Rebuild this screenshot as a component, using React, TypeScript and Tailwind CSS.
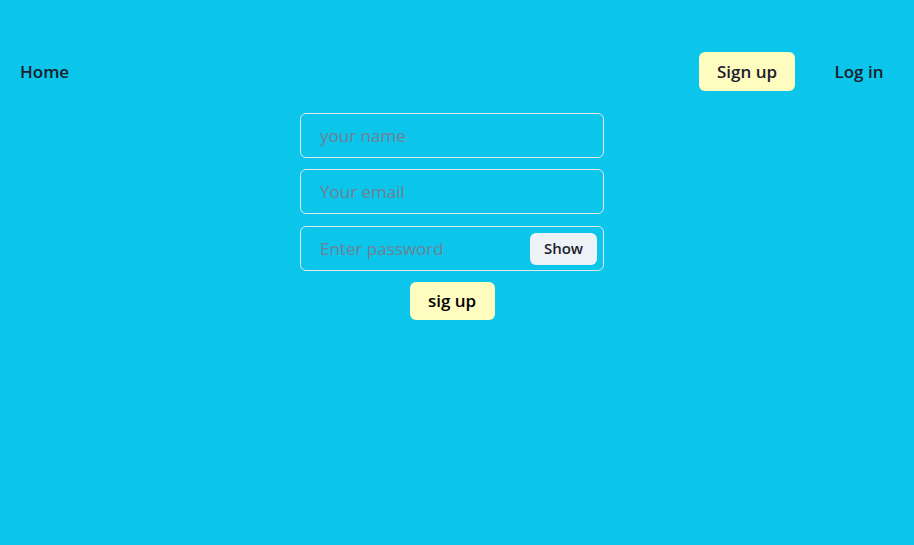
import { useState } from 'react';

export default function App() {
  const [show, setShow] = useState(false);

  return (
    <div className="min-h-[545px] w-full bg-[#0BC5EA] text-[#1A202C] font-['Open_Sans',sans-serif]">
      {/* top nav */}
      <nav className="flex items-center justify-between pt-[52px] pl-5 pr-[14px]">
        <a className="text-[17px] font-semibold leading-none">Home</a>
        <div className="flex items-center gap-[23px]">
          <button className="h-[39px] w-[96px] rounded-md bg-[#FEFCBF] text-[17px] font-semibold">
            Sign up
          </button>
          <button className="h-[39px] w-[82px] rounded-md text-[17px] font-semibold">
            Log in
          </button>
        </div>
      </nav>

      {/* sign up form */}
      <div className="mt-[22px] flex justify-center pr-[10px]">
        <form className="flex w-[304px] flex-col items-center">
          <input
            placeholder="your name"
            className="h-[45px] w-full rounded-md border border-[#E2E8F0] bg-transparent pl-[19px] text-[17px] outline-none placeholder:text-[#718096]"
          />
          <input
            placeholder="Your email"
            className="mt-[11px] h-[45px] w-full rounded-md border border-[#E2E8F0] bg-transparent pl-[19px] text-[17px] outline-none placeholder:text-[#718096]"
          />
          <div className="mt-3 flex h-[45px] w-full items-center rounded-md border border-[#E2E8F0] pr-[6px]">
            <input
              type={show ? 'text' : 'password'}
              placeholder="Enter password"
              className="h-full min-w-0 flex-1 bg-transparent pl-[19px] text-[17px] outline-none placeholder:text-[#718096]"
            />
            <button
              type="button"
              onClick={() => setShow(!show)}
              className="h-8 w-[67px] rounded-md bg-[#EDF2F7] text-[15px] font-semibold"
            >
              {show ? 'Hide' : 'Show'}
            </button>
          </div>
          <button
            type="button"
            className="mt-[11px] h-[38px] w-[85px] rounded-md bg-[#FEFCBF] text-[17px] font-semibold text-black"
          >
            sig up
          </button>
        </form>
      </div>
    </div>
  );
}
